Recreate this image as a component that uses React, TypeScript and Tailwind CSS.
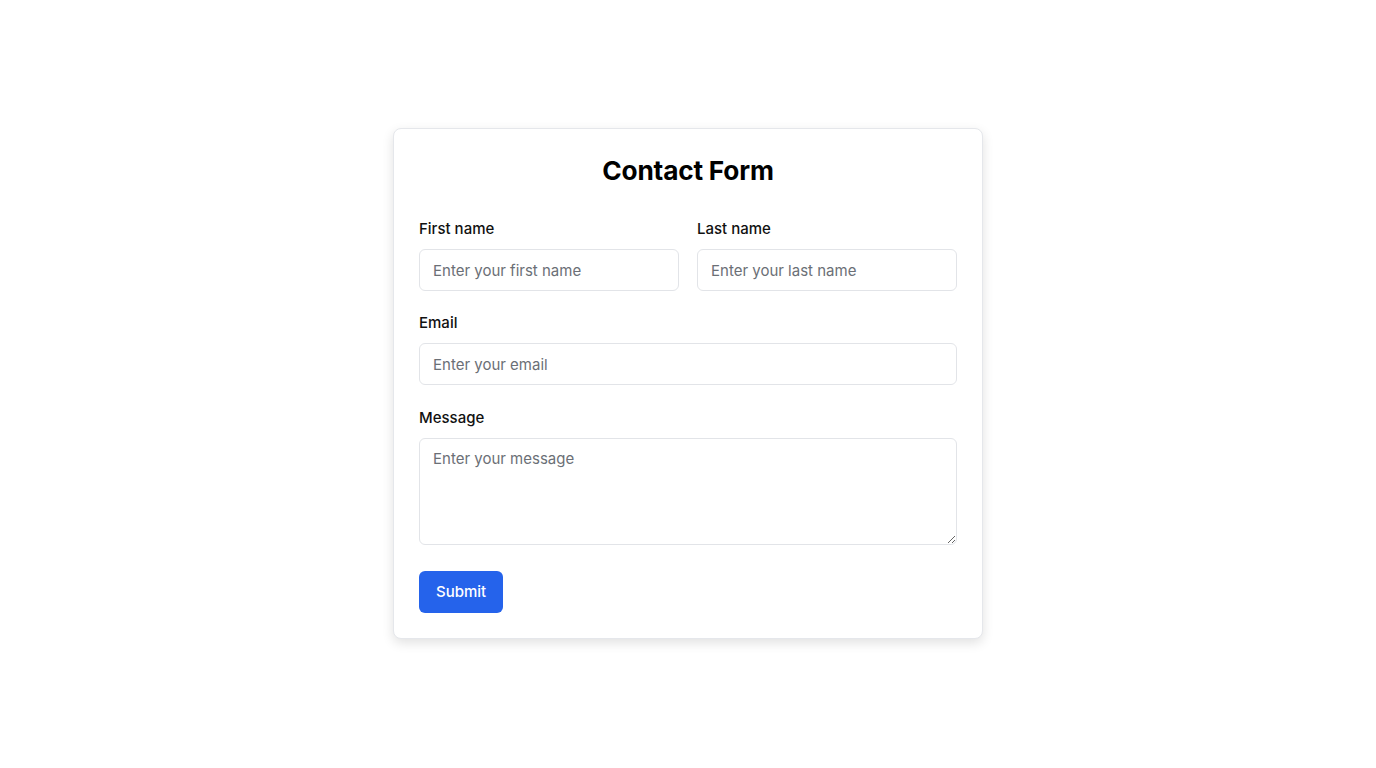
const App = () => {
  return (
    <div className="min-h-screen bg-white flex justify-center pt-[128px] font-['Inter',sans-serif] text-[#111]">
      <div className="w-[590px] h-[511px] bg-white border border-[#e5e7eb] rounded-lg shadow-[0_4px_12px_rgba(0,0,0,0.12)] px-[25px] pt-[25px]">
        <h1 className="text-[26.25px] leading-[34px] font-bold text-center text-black tracking-[-0.2px]">
          Contact Form
        </h1>

        <form className="mt-[30px]" onSubmit={(e) => e.preventDefault()}>
          {/* Nombres */}
          <div className="grid grid-cols-2 gap-[18px]">
            <div>
              <label className="block text-[15px] leading-[22px] font-medium mb-[9px]">
                First name
              </label>
              <input
                type="text"
                placeholder="Enter your first name"
                className="w-full h-[42px] px-[13px] text-[15px] border border-[#e2e4e8] rounded-md placeholder:text-[#6b6f76] outline-none"
              />
            </div>
            <div>
              <label className="block text-[15px] leading-[22px] font-medium mb-[9px]">
                Last name
              </label>
              <input
                type="text"
                placeholder="Enter your last name"
                className="w-full h-[42px] px-[13px] text-[15px] border border-[#e2e4e8] rounded-md placeholder:text-[#6b6f76] outline-none"
              />
            </div>
          </div>

          <div className="mt-[21px]">
            <label className="block text-[15px] leading-[22px] font-medium mb-[9px]">
              Email
            </label>
            <input
              type="email"
              placeholder="Enter your email"
              className="w-full h-[42px] px-[13px] text-[15px] border border-[#e2e4e8] rounded-md placeholder:text-[#6b6f76] outline-none"
            />
          </div>

          <div className="mt-[22px]">
            <label className="block text-[15px] leading-[22px] font-medium mb-[9px]">
              Message
            </label>
            <textarea
              placeholder="Enter your message"
              className="block w-full h-[107px] px-[13px] py-[9px] text-[15px] leading-[22px] border border-[#e2e4e8] rounded-md placeholder:text-[#6b6f76] outline-none"
            />
          </div>

          <button
            type="submit"
            className="mt-[26px] h-[42px] px-[17px] bg-[#2563eb] text-white text-[15px] font-medium rounded-md"
          >
            Submit
          </button>
        </form>
      </div>
    </div>
  );
};

export default App;
